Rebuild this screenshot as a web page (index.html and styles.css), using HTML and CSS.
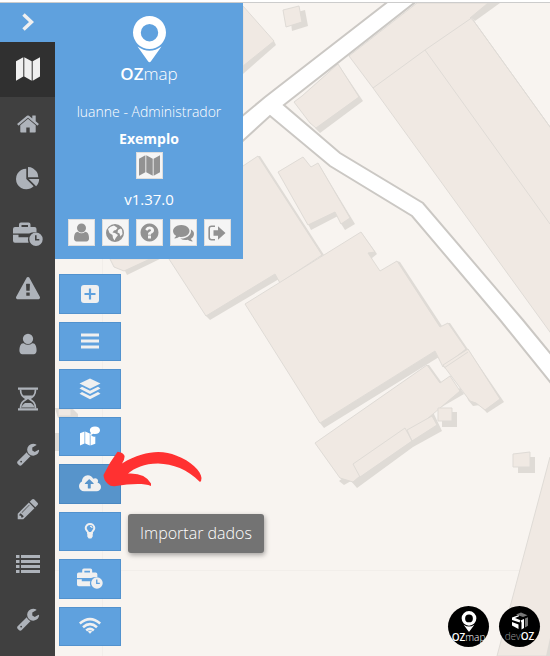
FILE: index.html
```html
<!DOCTYPE html>
<html lang="pt-BR">
<head>
    <meta charset="UTF-8">
    <meta name="viewport" content="width=device-width, initial-scale=1.0">
    <title>OZmap</title>
    <link rel="stylesheet" href="styles.css">
</head>
<body>
    <!-- icones -->
    <svg class="sprite" aria-hidden="true">
        <symbol id="i-map" viewBox="0 0 24 24"><path d="M0 4.200 7.300.3v19.300L0 23.700zM8.300.3l7.400 3.900v19.500l-7.400-4.100zM16.700 4.200 24 .3v19.300l-7.300 4.100z"/></symbol>
        <symbol id="i-home" viewBox="0 0 1792 1792"><path d="M1472 992v480q0 26-19 45t-45 19h-384v-384h-256v384h-384q-26 0-45-19t-19-45v-480q0-1 .5-3t.5-3l575-474 575 474q1 2 1 6zm223-69l-62 74q-8 9-21 11h-3q-13 0-21-7l-692-577-692 577q-12 8-24 7-13-2-21-11l-62-74q-8-10-7-23.5t11-21.500l719-599q32-26 76-26t76 26l244 204v-195q0-14 9-23t23-9h192q14 0 23 9t9 23v408l219 182q10 8 11 21.500t-7 23.500z"/></symbol>
        <symbol id="i-pie" viewBox="0 0 1792 1792"><path d="M768 890l546 546q-106 108-247.500 168t-298.500 60q-209 0-385.500-103t-279.500-279.500-103-385.500 103-385.500 279.500-279.500 385.500-103v762zm187 6h773q0 157-60 298.500t-168 247.500zm709-128h-768v-768q209 0 385.500 103t279.500 279.500 103 385.500z"/></symbol>
        <symbol id="i-briefcase" viewBox="0 0 30 24"><path d="M6 5V2.500Q6 .5 8 .5h7.500q2 0 2 2V5h4q2 0 2 2v3.200q-5.500 0-7.200 1.300H0V7q0-2 2-2zM8.500 5H15V3H8.500zM0 12.800h5.500v2.400h9.800q-1 3 .3 5.600H2q-2 0-2-2z"/><path fill-rule="evenodd" d="M23 10.500a6.700 6.700 0 1 1 0 13.400 6.700 6.700 0 0 1 0-13.400zm-1 2.700v5.200h4.300v-1.500h-2.700v-3.700z"/></symbol>
        <symbol id="i-warning" viewBox="0 0 1792 1792"><path d="M1024 1375v-190q0-14-9.500-23.500t-22.500-9.500h-192q-13 0-22.500 9.500t-9.500 23.500v190q0 14 9.500 23.500t22.500 9.500h192q13 0 22.500-9.500t9.500-23.500zm-2-374l18-459q0-12-10-19-13-11-24-11h-220q-11 0-24 11-10 7-10 21l17 457q0 10 10 16.500t24 6.500h185q14 0 23.500-6.500t10.500-16.500zm-14-934l768 1408q35 63-2 126-17 29-46.500 46t-63.500 17h-1536q-34 0-63.500-17t-46.500-46q-37-63-2-126l768-1408q17-31 47-49t65-18 65 18 47 49z"/></symbol>
        <symbol id="i-user" viewBox="0 0 1792 1792"><path d="M1536 1399q0 109-62.500 187t-150.500 78h-854q-88 0-150.500-78t-62.500-187q0-85 8.500-160.500t31.500-152 58.500-131 94-89 134.500-34.500q131 128 313 128t313-128q76 0 134.500 34.500t94 89 58.500 131 31.500 152 8.500 160.500zm-256-887q0 159-112.500 271.500t-271.500 112.500-271.500-112.500-112.500-271.500 112.500-271.500 271.500-112.500 271.500 112.500 112.500 271.500z"/></symbol>
        <symbol id="i-hourglass" viewBox="0 0 20 24"><path d="M0 .5h20v2.300H0zM0 21.200h20v2.300H0z"/><path fill="none" stroke="currentColor" stroke-width="1.700" d="M2.500 2.500c0 6 3 7.500 6 9.500-3 2-6 3.500-6 9.500M17.500 2.500c0 6-3 7.500-6 9.500 3 2 6 3.500 6 9.500"/><path d="M5 8.500h10q-1.500 1.800-4 3.500H9q-2.500-1.700-4-3.500zM3.500 20.500q.5-3 3.500-4.500h6q3 1.500 3.500 4.500z"/></symbol>
        <symbol id="i-wrench" viewBox="0 0 1792 1792"><path d="M448 1472q0-26-19-45t-45-19-45 19-19 45 19 45 45 19 45-19 19-45zm644-420l-682 682q-37 37-90 37-52 0-91-37l-106-108q-38-36-38-90 0-53 38-91l681-681q39 98 114.500 173.500t173.500 114.500zm634-435q0 39-23 106-47 134-164.500 217.500t-258.500 83.500q-185 0-316.500-131.500t-131.500-316.500 131.500-316.500 316.500-131.500q58 0 121.500 16.500t107.500 46.500q16 11 16 28t-16 28l-293 169v224l193 107q5-3 79-48.500t135.500-81 70.500-35.500q15 0 23.500 10t8.500 25z"/></symbol>
        <symbol id="i-pencil" viewBox="0 0 1792 1792"><path d="M491 1536l91-91-235-235-91 91v107h128v128h107zm523-928q0-22-22-22-10 0-17 7l-542 542q-7 7-7 17 0 22 22 22 10 0 17-7l542-542q7-7 7-17zm-54-192l416 416-832 832h-416v-416zm683 96q0 53-37 90l-166 166-416-416 166-165q36-38 90-38 53 0 91 38l235 234q37 39 37 91z"/></symbol>
        <symbol id="i-list" viewBox="0 0 24 24"><path d="M0 3h3.500v3H0zM5 3h19v3H5zM0 8h3.500v3H0zM5 8h19v3H5zM0 13h3.500v3H0zM5 13h19v3H5zM0 18h3.500v3H0zM5 18h19v3H5z"/></symbol>
        <symbol id="i-globe" viewBox="0 0 18 18"><path fill-rule="evenodd" d="M9 0a9 9 0 1 1 0 18A9 9 0 0 1 9 0zM2 5l1.500 4 3 2 .5 3 1.500 2.500 1.200-2.500L12 11 9 9 6.500 8.500 8 6.500l2-.5 1.500-2L8 1.500 4.500 2.800zM12 6l-.5 2.500 2 1 1 3 2-2.500-.5-4.500-1.500-1z"/></symbol>
        <symbol id="i-help" viewBox="0 0 1792 1792"><path d="M1024 1376v-192q0-14-9-23t-23-9h-192q-14 0-23 9t-9 23v192q0 14 9 23t23 9h192q14 0 23-9t9-23zm256-672q0-88-55.500-163t-138.500-116-170-41q-243 0-371 213-15 24 8 42l132 100q7 6 19 6 16 0 25-12 53-68 86-92 34-24 86-24 48 0 85.500 26t37.500 59q0 38-20 61t-68 45q-63 28-115.500 86.500t-52.500 125.500v36q0 14 9 23t23 9h192q14 0 23-9t9-23q0-19 21.500-49.500t54.500-49.500q32-18 49-28.500t46-35 44.500-48 28-60.500 12.500-81zm384 192q0 209-103 385.500t-279.500 279.500-385.500 103-385.500-103-279.500-279.500-103-385.500 103-385.500 279.500-279.500 385.500-103 385.500 103 279.500 279.500 103 385.500z"/></symbol>
        <symbol id="i-comments" viewBox="0 0 1792 1792"><path d="M1408 768q0 139-94 257t-256.500 186.500-353.500 68.500q-86 0-176-16-124 88-278 128-36 9-86 16h-3q-11 0-20.500-8t-11.500-21q-1-3-1-6.500t.5-6.500 2-6l2.500-5 3.500-5.500 4-5 4.500-5 4-4.500q5-6 23-25t26-29.500 22.500-29 25-38.500 20.500-44q-124-72-195-177t-71-224q0-139 94-257t256.500-186.500 353.500-68.500 353.500 68.500 256.500 186.500 94 257zm384 256q0 120-71 224.500t-195 176.500q10 24 20.500 44t25 38.500 22.500 29 26 29.500 23 25q1 1 4 4.500t4.500 5 4 5 3.500 5.500l2.500 5 2 6 .5 6.500-1 6.500q-3 14-13 22t-22 7q-50-7-86-16-154-40-278-128-90 16-176 16-271 0-472-132 58 4 88 4 161 0 309-45t264-129q125-92 192-212t67-254q0-77-23-152 129 71 204 178t75 230z"/></symbol>
        <symbol id="i-logout" viewBox="0 0 18 18"><path fill="none" stroke="currentColor" stroke-width="1.600" d="M7 2.300H3.500q-2.300 0-2.300 2.200v9q0 2.200 2.300 2.200H7"/><path d="M5.500 6.200H10V2.300l7.500 6.700-7.500 6.700v-3.900H5.500z"/></symbol>
        <symbol id="i-plus" viewBox="0 0 18 18"><path fill-rule="evenodd" d="M3 0h12q3 0 3 3v12q0 3-3 3H3q-3 0-3-3V3q0-3 3-3zm4.900 3.500v4.400H3.500v2.200h4.400v4.400h2.200v-4.400h4.400V7.900h-4.400V3.500z"/></symbol>
        <symbol id="i-bars" viewBox="0 0 18 18"><path d="M0 1.500h18v3H0zM0 7.500h18v3H0zM0 13.500h18v3H0z"/></symbol>
        <symbol id="i-layers" viewBox="0 0 22 22"><path d="M11 .5 21.500 5.500 11 10.700.5 5.500zM3 8.700l8 4 8-4 2.500 1.800L11 16 .5 10.500zM3 14l8 4 8-4 2.500 1.800L11 21.300.5 15.800z"/></symbol>
        <symbol id="i-mapchat" viewBox="0 0 20 20"><path d="M0 7.200 4.500 5.500v12L0 19.500zM5.200 5.500l4.600 2v12l-4.600-2zM10.500 8q1.500 3.500 4.800 2.500v7.200l-4.800 1.800z"/><path d="M15 .5c3 0 5 1.500 5 3.700s-2 3.800-5 3.800q-1 0-1.700-.2L10 9.500l.8-2.800Q9.800 5.500 9.800 4.200C9.800 2 12 .5 15 .5z"/></symbol>
        <symbol id="i-cloud" viewBox="0 0 1920 1792"><path d="M1280 864q0-14-9-23l-352-352q-9-9-23-9t-23 9l-351 351q-10 12-10 24 0 14 9 23t23 9h224v352q0 13 9.500 22.500t22.500 9.500h192q13 0 22.500-9.500t9.500-22.500v-352h224q13 0 22.500-9.500t9.500-22.500zm640 288q0 159-112.500 271.500t-271.500 112.500h-1088q-185 0-316.500-131.500t-131.500-316.500q0-130 70-240t188-165q-2-30-2-43 0-212 150-362t362-150q156 0 285.500 87t188.500 231q71-62 166-62 106 0 181 75t75 181q0 76-41 138 130 31 213.500 135.500t83.500 238.500z"/></symbol>
        <symbol id="i-bulb" viewBox="0 0 12 16"><path fill="none" stroke="currentColor" stroke-width="2" d="M4.200 10C4.200 8 1.700 7.500 1.700 5a4.300 4 0 0 1 8.600 0c0 2.500-2.500 3-2.500 5z"/><path d="M3.300 9.500h5.400v4L7.300 15.500H4.700l-1.400-2zM6 2.800q2.500 0 2.700 2.200H7.600Q7.500 3.900 6 3.700z"/></symbol>
        <symbol id="i-wifi" viewBox="0 0 22 16"><path fill="none" stroke="currentColor" stroke-width="2.600" d="M.8 5.500q10.200-8.800 20.400 0M4 9.200q7-6 14 0M7.200 12.500q3.800-3.200 7.600 0"/><path d="M8.800 13.500q2.200-1.600 4.400 0L11 15.800z"/></symbol>
        <symbol id="i-pin" viewBox="0 0 33 47"><path fill-rule="evenodd" d="M16.500 0a16.500 16.500 0 1 1 0 33 16.500 16.500 0 0 1 0-33zm0 8a8.700 8.700 0 1 0 0 17.400 8.700 8.700 0 0 0 0-17.400z"/><path d="M4.500 30.500q12 8.500 24 0L17.800 45.500q-1.300 1.500-2.600 0z"/></symbol>
    </svg>

    <!-- mapa de fundo -->
    <svg class="mapa" viewBox="0 0 550 656" preserveAspectRatio="xMinYMin slice" aria-hidden="true">
        <g class="linha">
            <path d="M102.500 3v653M55 570.500h495"/>
        </g>
        <g class="sombra">
            <path d="M274 41l2 4-33 29V62z"/>
            <path d="M290 14l15-4 3 16-16 5z"/>
            <path d="M470 17l18-14h12l-25 18z"/>
            <path d="M338 64l25 37-43 32-5-5 40-30z"/>
            <path d="M318 163l37 61-10 6-5-8zM308 224l28-15 2 7-27 14z"/>
            <path d="M124 269l26-12h14l-37 18z"/>
            <path d="M205 315l70-42 4 6-69 41z"/>
            <path d="M258 156l2 0 64 99-4 2zM361 232l16 22-5 4 2 8-8-12z"/>
            <path d="M320 423l115-72 4 6-115 71zM397 261l3 1 42 64-4 2z"/>
            <path d="M448 323l2 0 54 79-17 11-7-8-7 1-5-6z"/>
            <path d="M427 365l2 0 13 18-2 2zM460 388l4 6-31 18 9 19-29 16-56 41-6-7-7 4-5-4z"/>
            <path d="M442 412h15v15h-15zM518 457h17v16h-17z"/>
            <path d="M55 408h17l6 6v4H58M55 433h8v18h-8z"/>
        </g>
        <g class="predio">
            <path d="M243 6l31 35-31 25z"/>
            <path d="M283 10l16-4 3 16-16 5z"/>
            <path d="M417 3h71l-18 15 3 2 90 125v205L373 88l-24-32z"/>
            <path d="M338 64l21 33-43 31-6-5-16-21 8-6z"/>
            <path d="M278 172l25-15 8 10 7-4 32 55-9 6-6-12-27 13z"/>
            <path d="M110 259h40l-26 12-10-4z"/>
            <path d="M169 259V210l74-44 15-10 64 99-42 28-5-9-69 42z"/>
            <path d="M245 304l116-72 14 20-7 1 12 18 17-10 43 66 8-4 18 26-23 18-8-16-115 72z"/>
            <path d="M315 443l112-78 13 18 10-7 10 15-107 91-13-4z"/>
            <path d="M353 464l52-36 7 13-52 36zM407 430l25-14 5 9-25 16z"/>
            <path d="M438 408h14v13h-14zM513 454l17-2v15h-17z"/>
            <path d="M550 457l-53 199h63V457z"/>
            <path d="M58 409h13v7H58z"/>
            <path d="M443 365l25-16 32 50-15 11-9-7-6-2z"/>
        </g>
        <g class="contorno">
            <path d="M373 88l52-38 48-33M425 50l125 174M473 20l90 125M444 368l24-16"/>
        </g>
        <path class="sombra" d="M550 638v18h-4z"/>
        <path class="rua" d="M390 0L265 97l-30 25v26l35-32 60 50 82 50 88 104 55 68v-29l-32-39-100-117-83-50-56-48L418 0z"/>
    </svg>

    <div class="app">
        <div class="topo"></div>
        <div class="paineis">
            <nav class="sidebar" aria-label="Principal">
                <button class="toggle" aria-label="Abrir menu"><svg viewBox="0 0 12 18"><path fill="none" stroke="currentColor" stroke-width="3.500" d="M1.500 1.500 9.500 9l-8 7.500"/></svg></button>
                <a href="#" class="ativo" aria-label="Mapa"><svg><use href="#i-map"/></svg></a>
                <a href="#" aria-label="Início"><svg><use href="#i-home"/></svg></a>
                <a href="#" aria-label="Gráficos"><svg><use href="#i-pie"/></svg></a>
                <a href="#" aria-label="Serviços"><svg class="largo"><use href="#i-briefcase"/></svg></a>
                <a href="#" aria-label="Alertas"><svg><use href="#i-warning"/></svg></a>
                <a href="#" aria-label="Usuários"><svg><use href="#i-user"/></svg></a>
                <a href="#" aria-label="Histórico"><svg><use href="#i-hourglass"/></svg></a>
                <a href="#" aria-label="Ferramentas"><svg><use href="#i-wrench"/></svg></a>
                <a href="#" aria-label="Editar"><svg><use href="#i-pencil"/></svg></a>
                <a href="#" aria-label="Lista"><svg><use href="#i-list"/></svg></a>
                <a href="#" aria-label="Configurações"><svg><use href="#i-wrench"/></svg></a>
            </nav>

            <div class="coluna">
                <section class="perfil">
                    <svg class="pin"><use href="#i-pin"/></svg>
                    <div class="marca"><b>OZ</b>map</div>
                    <p class="usuario">luanne - Administrador</p>
                    <p class="projeto">Exemplo</p>
                    <button class="quadro" aria-label="Projeto"><svg><use href="#i-map"/></svg></button>
                    <p class="versao">v1.37.0</p>
                    <div class="atalhos">
                        <button class="quadro" aria-label="Perfil"><svg><use href="#i-user"/></svg></button>
                        <button class="quadro" aria-label="Idioma"><svg class="menor"><use href="#i-globe"/></svg></button>
                        <button class="quadro" aria-label="Ajuda"><svg><use href="#i-help"/></svg></button>
                        <button class="quadro" aria-label="Mensagens"><svg><use href="#i-comments"/></svg></button>
                        <button class="quadro" aria-label="Sair"><svg class="menor"><use href="#i-logout"/></svg></button>
                    </div>
                </section>

                <div class="menu">
                    <button aria-label="Adicionar"><svg><use href="#i-plus"/></svg></button>
                    <button aria-label="Listar"><svg><use href="#i-bars"/></svg></button>
                    <button aria-label="Camadas"><svg class="medio"><use href="#i-layers"/></svg></button>
                    <button aria-label="Mapas"><svg class="branco"><use href="#i-mapchat"/></svg></button>
                    <button class="foco" aria-describedby="dica"><svg class="medio"><use href="#i-cloud"/></svg>
                        <svg class="seta" viewBox="0 0 100 36"><path d="M.5 24Q6 12 14.500.7q5.500.5 7 4Q22 8 19 12.500C41-1 60-1 73 4.500 88 10 98 20 98.500 27q0 3-1.500 4C84 18 70 13 55 12.500 41 12.500 32 17 25 22.500q17-1 23 10V35c-7-3-22-2-35 0Q8 36 5 33 .5 29 .5 24z"/></svg>
                        <span class="dica" id="dica">Importar dados</span>
                    </button>
                    <button aria-label="Ideias"><svg class="lampada"><use href="#i-bulb"/></svg></button>
                    <button aria-label="Serviços"><svg class="pasta"><use href="#i-briefcase"/></svg></button>
                    <button aria-label="Rede"><svg class="medio"><use href="#i-wifi"/></svg></button>
                </div>
            </div>
        </div>
    </div>

    <div class="selos">
        <a href="#" class="selo"><svg><use href="#i-pin"/></svg><span><b>OZ</b>map</span></a>
        <a href="#" class="selo dev"><svg viewBox="0 0 18 18"><path d="M1 5.500 8 3v1.300L4 6l5 2-.2 2.500L1 8zM1 10l6.500 2.500V17L1 13.500zM9.500 8.500 13 7v9l-2.500 1.500v-7z"/><path class="cinza" d="M5 2.500 10 .5l6.500 2.700L12 5zM14 6.500l3-1.200v8.500l-3 1.700z"/></svg><span>dev<b>OZ</b></span></a>
    </div>
</body>
</html>
```
FILE: styles.css
```css
* {
    box-sizing: border-box;
}
body {
    margin: 0;
    background-color: #f8f4f0;
    font-family: "Open Sans", "Noto Sans", sans-serif;
    overflow: hidden;
}
svg {
    fill: currentColor;
    display: block;
}
button {
    border: none;
    padding: 0;
    font: inherit;
    cursor: pointer;
}
p {
    margin: 0;
}
.sprite {
    display: none;
}

/* mapa */
.mapa {
    position: absolute;
    top: 0;
    left: 0;
    width: 100%;
    height: 100%;
}
.linha {
    stroke: #f2eeea;
    fill: none;
}
.sombra {
    fill: #dfdbd6;
}
.predio {
    fill: #f0e9e3;
    stroke: #dfdbd6;
}
.contorno {
    fill: none;
    stroke: #dfdbd6;
}
.rua {
    fill: #fff;
    stroke: #cbc8c4;
    stroke-width: 2;
}

/* layout */
.app {
    position: relative;
    display: flex;
    flex-direction: column;
    height: 100vh;
}
.topo {
    flex: none;
    height: 3px;
    background-color: #fff;
    border-bottom: 1px solid #ccc;
}
.paineis {
    display: flex;
    flex: 1;
    min-height: 0;
}
.sidebar {
    display: flex;
    flex-direction: column;
    width: 55px;
    background-color: #404040;
}
.sidebar a,
.toggle {
    flex: none;
    display: flex;
    align-items: center;
    justify-content: center;
    height: 55px;
    padding-bottom: 2px;
    color: #aeb3ba;
}
.sidebar .toggle {
    height: 39px;
    background-color: #5fa1de;
    color: #f0f0f0;
}
.sidebar .ativo {
    background-color: #303030;
    color: #f0f0f0;
}
.sidebar svg {
    width: 24px;
    height: 24px;
}
.sidebar .toggle svg {
    width: 12px;
    height: 18px;
}
.sidebar .largo {
    width: 30px;
}

/* perfil */
.perfil {
    display: flex;
    flex-direction: column;
    align-items: center;
    width: 188px;
    height: 256px;
    padding-top: 13px;
    background-color: #5fa1de;
    color: #fff;
    font-size: 14px;
    font-weight: 300;
    line-height: 20px;
}
.pin {
    width: 33px;
    height: 47px;
}
.marca {
    font-size: 17px;
    line-height: 22px;
}
.marca b,
.selo b {
    font-weight: 600;
}
.usuario {
    margin-top: 17px;
}
.projeto {
    margin-top: 7px;
    font-weight: 700;
}
.quadro {
    display: flex;
    align-items: center;
    justify-content: center;
    width: 27px;
    height: 27px;
    margin-top: 3px;
    background-color: #f5f5f5;
    border: 1px solid #ddd;
    color: #929292;
}
.quadro svg {
    width: 21px;
    height: 21px;
}
.quadro .menor {
    width: 18px;
    height: 18px;
}
.versao {
    margin-top: 10px;
    font-size: 15px;
    font-weight: 400;
}
.atalhos {
    display: flex;
    gap: 7px;
    margin-top: 7px;
}

/* menu do mapa */
.menu {
    display: grid;
    grid-auto-rows: 1fr;
    gap: 8px;
    width: 62px;
    height: 372px;
    margin: 15px 0 0 4px;
}
.menu button {
    position: relative;
    display: flex;
    align-items: center;
    justify-content: center;
    background-color: #5fa1de;
    border: 1px solid #5292ce;
    color: #f0f0f0;
}
.menu .foco {
    background-color: #5794cb;
    border-color: #4a88c2;
}
.menu svg {
    width: 18px;
    height: 18px;
}
.menu .medio {
    width: 22px;
    height: 22px;
}
.menu .branco {
    width: 20px;
    height: 20px;
    color: #fff;
}
.menu .lampada {
    width: 12px;
    height: 16px;
}
.menu .pasta {
    width: 26px;
    height: 21px;
}
.menu .seta {
    position: absolute;
    left: 43px;
    top: -14px;
    width: 100px;
    height: 36px;
    color: #ff3131;
    z-index: 1;
}
.dica {
    position: absolute;
    left: 68px;
    top: 49px;
    padding: 0 12px;
    border-radius: 3px;
    background-color: #737373;
    box-shadow: 1px 2px 5px rgba(0, 0, 0, 0.35);
    color: #fff;
    font-size: 16px;
    font-weight: 300;
    line-height: 39px;
    white-space: nowrap;
}

/* selos */
.selos {
    position: absolute;
    right: 10px;
    bottom: 9px;
    display: flex;
    gap: 10px;
}
.selo {
    display: flex;
    flex-direction: column;
    align-items: center;
    width: 41px;
    height: 41px;
    padding-top: 5px;
    border-radius: 50%;
    background-color: #000;
    color: #fff;
    font-size: 10px;
    font-weight: 300;
    line-height: 10px;
    text-decoration: none;
}
.selo svg {
    width: 20px;
    height: 21px;
}
.dev svg {
    width: 18px;
    height: 20px;
}
.dev span {
    color: #999;
}
.dev b {
    color: #fff;
}
.cinza {
    fill: #777;
}
```
